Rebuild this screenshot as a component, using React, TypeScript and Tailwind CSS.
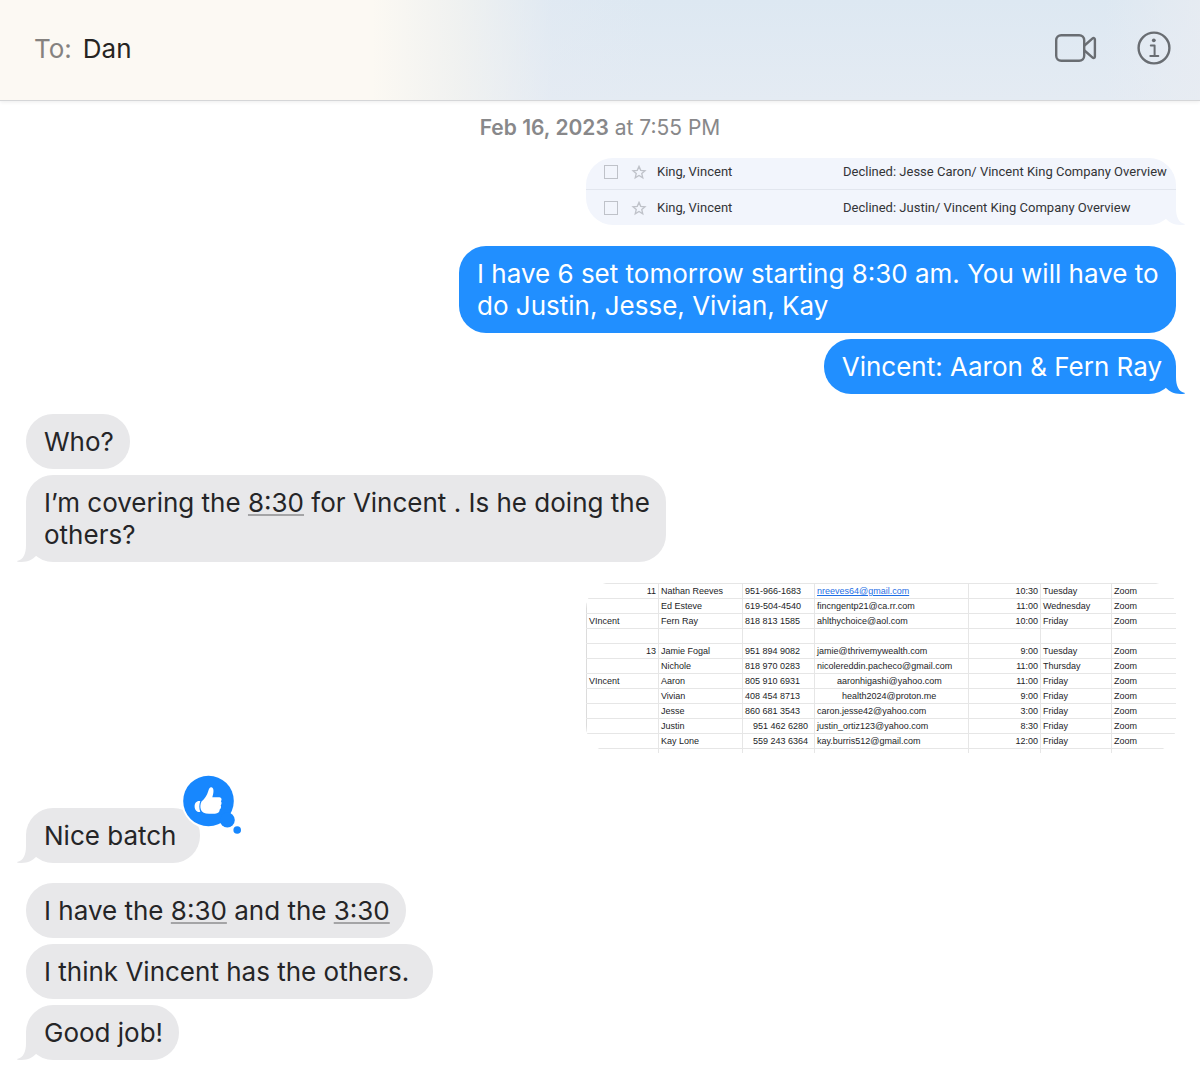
import { ReactNode } from 'react'
import clsx from 'clsx'

interface BubbleProps {
  from: 'me' | 'them'
  tail?: boolean
  children: ReactNode
}

interface Appointment {
  owner?: string
  day?: string
  name?: string
  phone?: string
  phoneAlign?: 'right'
  email?: string
  emailClassName?: string
  linked?: boolean
  time?: string
  weekday?: string
  place?: string
}

const emails = [
  'Declined: Jesse Caron/ Vincent King Company Overview',
  'Declined: Justin/ Vincent King Company Overview',
]

const appointments: Appointment[] = [
  { day: '11', name: 'Nathan Reeves', phone: '951-966-1683', email: 'nreeves64@gmail.com', linked: true, time: '10:30', weekday: 'Tuesday', place: 'Zoom' },
  { name: 'Ed Esteve', phone: '619-504-4540', email: 'fincngentp21@ca.rr.com', time: '11:00', weekday: 'Wednesday', place: 'Zoom' },
  { owner: 'VIncent', name: 'Fern Ray', phone: '818 813 1585', email: 'ahlthychoice@aol.com', time: '10:00', weekday: 'Friday', place: 'Zoom' },
  {},
  { day: '13', name: 'Jamie Fogal', phone: '951 894 9082', email: 'jamie@thrivemywealth.com', time: '9:00', weekday: 'Tuesday', place: 'Zoom' },
  { name: 'Nichole', phone: '818 970 0283', email: 'nicolereddin.pacheco@gmail.com', time: '11:00', weekday: 'Thursday', place: 'Zoom' },
  { owner: 'VIncent', name: 'Aaron', phone: '805 910 6931', email: 'aaronhigashi@yahoo.com', emailClassName: 'pl-[22px]', time: '11:00', weekday: 'Friday', place: 'Zoom' },
  { name: 'Vivian', phone: '408 454 8713', email: 'health2024@proton.me', emailClassName: 'pl-[27px]', time: '9:00', weekday: 'Friday', place: 'Zoom' },
  { name: 'Jesse', phone: '860 681 3543', email: 'caron.jesse42@yahoo.com', time: '3:00', weekday: 'Friday', place: 'Zoom' },
  { name: 'Justin', phone: '951 462 6280', phoneAlign: 'right', email: 'justin_ortiz123@yahoo.com', time: '8:30', weekday: 'Friday', place: 'Zoom' },
  { name: 'Kay Lone', phone: '559 243 6364', phoneAlign: 'right', email: 'kay.burris512@gmail.com', time: '12:00', weekday: 'Friday', place: 'Zoom' },
]

function Tail({ side, className }: { side: 'left' | 'right'; className: string }) {
  return (
    <svg
      viewBox="0 0 20 28"
      className={clsx(
        'absolute bottom-0 h-7 w-5',
        side === 'right' ? '-right-2.5' : '-left-2.5 -scale-x-100',
        className
      )}
      aria-hidden="true"
    >
      <path fill="currentColor" d="M10 0V11C10 20 12.500 25.500 19 27C19.500 27.500 18 28 14.500 28C8 28 3 25 0 22V0Z" />
    </svg>
  )
}

function Bubble({ from, tail, children }: BubbleProps) {
  const mine = from === 'me'
  return (
    <div
      className={clsx(
        'relative w-fit rounded-[27px] pt-3 pb-[11px] pl-[18px] text-[26px] leading-8',
        mine
          ? 'max-w-[717px] self-end bg-[#218fff] pr-3.5 text-white'
          : 'max-w-[642px] self-start bg-[#e8e8ea] pr-4 text-[#252527]'
      )}
    >
      {children}
      {tail && <Tail side={mine ? 'right' : 'left'} className={mine ? 'text-[#218fff]' : 'text-[#e8e8ea]'} />}
    </div>
  )
}

function Time({ children }: { children: ReactNode }) {
  return (
    <a href="#time" className="underline decoration-[#a4a4a6] decoration-2 underline-offset-2">
      {children}
    </a>
  )
}

function Tapback() {
  return (
    <svg viewBox="0 0 60 60" className="absolute -top-[33px] -right-[42px] size-[60px]" role="img" aria-label="Liked">
      <circle cx="26.500" cy="26.500" r="27" fill="#fff" />
      <g fill="#1787fe">
        <circle cx="26.500" cy="26" r="25.300" />
        <circle cx="45.300" cy="45" r="7.500" />
        <circle cx="55.200" cy="55" r="3.800" />
      </g>
      <g fill="#fff">
        <path d="M18.300 26.200C15 25.300 12.600 28 12.600 31.200C12.600 35 15 37.700 18.300 36.800C17 33.500 17 29.500 18.300 26.200Z" />
        <path d="M19.500 26.500C22.500 24.300 25 20.500 26.300 16C27 13 28.300 11.600 30 12.400C32.300 13.600 31.600 18 30.300 22.300H37.500C39.600 22.500 40.200 24.800 38.900 26.300C39.900 27.600 39.700 29.300 38.700 30.300C39.500 31.900 39 33.600 37.700 34.500C37.700 37 36 38.600 33 38.700H27C22.500 38.700 20 37.300 19 35C18 32.200 18.200 29 19.500 26.500Z" />
      </g>
    </svg>
  )
}

function Header() {
  return (
    <header className="flex h-[101px] items-center justify-between border-b border-[#d5d6d8] bg-[linear-gradient(90deg,#fcf9f3_31%,rgb(243_243_240/0.85)_38%,rgb(229_235_243/0.4)_46%,rgb(229_235_243/0)_54%,rgb(229_235_243/0)_92%,rgb(232_236_242/0.8)_100%),linear-gradient(180deg,#dde8f2,#e4ebf3)] pr-[29px] pb-1 pl-[34px] shadow-[0_1px_4px_rgba(0,0,0,0.08)]">
      <h1 className="flex gap-[11px] pt-0.5 text-[26px] leading-8">
        <span className="text-[#85827f]">To:</span>
        <span className="text-[#262422]">Dan</span>
      </h1>
      <div className="flex items-center gap-10 text-[#696d72]">
        <button type="button" aria-label="Video call">
          <svg viewBox="0 0 42 28" className="h-7 w-[42px]" fill="none" stroke="currentColor" strokeWidth="2.400" strokeLinejoin="round">
            <rect x="1.200" y="1.200" width="28" height="25.600" rx="5" />
            <path d="M29.500 11.500L37.300 4.700C38.600 3.600 39.900 4 39.900 5.500V22.500C39.900 24 38.600 24.400 37.300 23.300L29.500 16.500" />
          </svg>
        </button>
        <button type="button" aria-label="Details">
          <svg viewBox="0 0 34 34" className="size-[34px]" fill="none" stroke="currentColor" strokeWidth="2.400">
            <circle cx="17" cy="17" r="15.400" />
            <circle cx="16.800" cy="9.300" r="1.900" fill="currentColor" stroke="none" />
            <path strokeWidth="2" strokeLinecap="round" strokeLinejoin="round" d="M13.800 14.600H17.600V25M13.300 25H21.300" />
          </svg>
        </button>
      </div>
    </header>
  )
}

function EmailPreview() {
  return (
    <div className="relative w-full max-w-[590px] self-end text-[#333437]">
      <Tail side="right" className="text-[#f2f5fc]" />
      <div className="relative overflow-hidden rounded-[27px] bg-[#f2f5fc] font-[Roboto,sans-serif] text-[13px]">
        {emails.map((subject, index) => (
          <div
            key={subject}
            className={clsx('flex items-center whitespace-nowrap', index === 0 ? 'h-8 border-b border-[#e2e6ee] pb-1' : 'h-[35px]')}
          >
            <input
              type="checkbox"
              aria-label={subject}
              className="ml-[18px] size-3.5 shrink-0 appearance-none border border-[#bfc2c9]"
            />
            <svg viewBox="0 0 24 24" className="ml-3 size-[18px] shrink-0 text-[#bfc2c9]" fill="none" stroke="currentColor" strokeWidth="1.800">
              <path d="M12 4.500L14.300 9.800L20 10.300L15.700 14.100L17 19.700L12 16.700L7 19.700L8.300 14.100L4 10.300L9.700 9.800Z" />
            </svg>
            <span className="ml-[9px] w-[186px] shrink-0">King, Vincent</span>
            <span>{subject}</span>
          </div>
        ))}
      </div>
    </div>
  )
}

function Sheet() {
  return (
    <div className="w-full max-w-[590px] self-end overflow-hidden rounded-[27px] pt-px">
      <table className="w-full table-fixed border-collapse border-l border-[#dcdcdc] font-['Liberation_Sans',Arial,sans-serif] text-[9px] leading-[14px] whitespace-nowrap text-[#1d1d1f]">
        <colgroup>
          <col className="w-[72px]" />
          <col className="w-[84px]" />
          <col className="w-[72px]" />
          <col className="w-[154px]" />
          <col className="w-[72px]" />
          <col className="w-[71px]" />
          <col />
        </colgroup>
        <tbody>
          {appointments.map((row, index) => (
            <tr key={index} className="h-[15px] border-y border-[#e6e6e6]">
              <td className={clsx('border-r border-[#e6e6e6] px-0.5', row.day && 'text-right')}>{row.owner || row.day}</td>
              <td className="border-r border-[#e6e6e6] pl-0.5">{row.name}</td>
              <td className={clsx('border-r border-[#e6e6e6]', row.phoneAlign ? 'pr-1.5 text-right' : 'pl-0.5')}>{row.phone}</td>
              <td className={clsx('border-r border-[#e6e6e6]', row.emailClassName || 'pl-0.5')}>
                {row.linked ? (
                  <a href={`mailto:${row.email}`} className="text-[#1f6fe5] underline">
                    {row.email}
                  </a>
                ) : (
                  row.email
                )}
              </td>
              <td className="border-r border-[#e6e6e6] pr-0.5 text-right">{row.time}</td>
              <td className="border-r border-[#e6e6e6] pl-0.5">{row.weekday}</td>
              <td className="pl-0.5">{row.place}</td>
            </tr>
          ))}
          {/* top sliver of the next row */}
          <tr className="h-1">
            {[0, 1, 2, 3, 4, 5].map((column) => (
              <td key={column} className="border-r border-[#e6e6e6] p-0" />
            ))}
            <td className="p-0" />
          </tr>
        </tbody>
      </table>
    </div>
  )
}

export default function App() {
  return (
    <div className="min-h-screen bg-white font-[Inter,sans-serif]">
      <Header />
      <main className="flex flex-col px-6 pt-[15px] pb-1.5">
        <p className="text-center text-[21px] leading-6 text-[#88888a]">
          <span className="font-semibold">Feb 16, 2023</span> at 7:55 PM
        </p>
        <div className="mt-[18px] flex flex-col gap-[21px]">
          <EmailPreview />
          <div className="flex flex-col gap-1.5">
            <Bubble from="me">I have 6 set tomorrow starting 8:30 am. You will have to do Justin, Jesse, Vivian, Kay</Bubble>
            <Bubble from="me" tail>
              Vincent: Aaron & Fern Ray
            </Bubble>
          </div>
        </div>
        <div className="mt-5 flex flex-col gap-1.5 pl-0.5">
          <Bubble from="them">Who?</Bubble>
          <Bubble from="them" tail>
            I’m covering the <Time>8:30</Time> for Vincent . Is he doing the
            <br />
            others?
          </Bubble>
        </div>
        <div className="mt-5 flex flex-col">
          <Sheet />
        </div>
        <div className="mt-[55px] flex flex-col pl-0.5">
          <Bubble from="them" tail>
            Nice batch&nbsp;
            <Tapback />
          </Bubble>
        </div>
        <div className="mt-5 flex flex-col gap-1.5 pl-0.5">
          <Bubble from="them">
            I have the <Time>8:30</Time> and the <Time>3:30</Time>
          </Bubble>
          <Bubble from="them">I think Vincent has the others.&nbsp;</Bubble>
          <Bubble from="them" tail>
            Good job!
          </Bubble>
        </div>
      </main>
    </div>
  )
}
